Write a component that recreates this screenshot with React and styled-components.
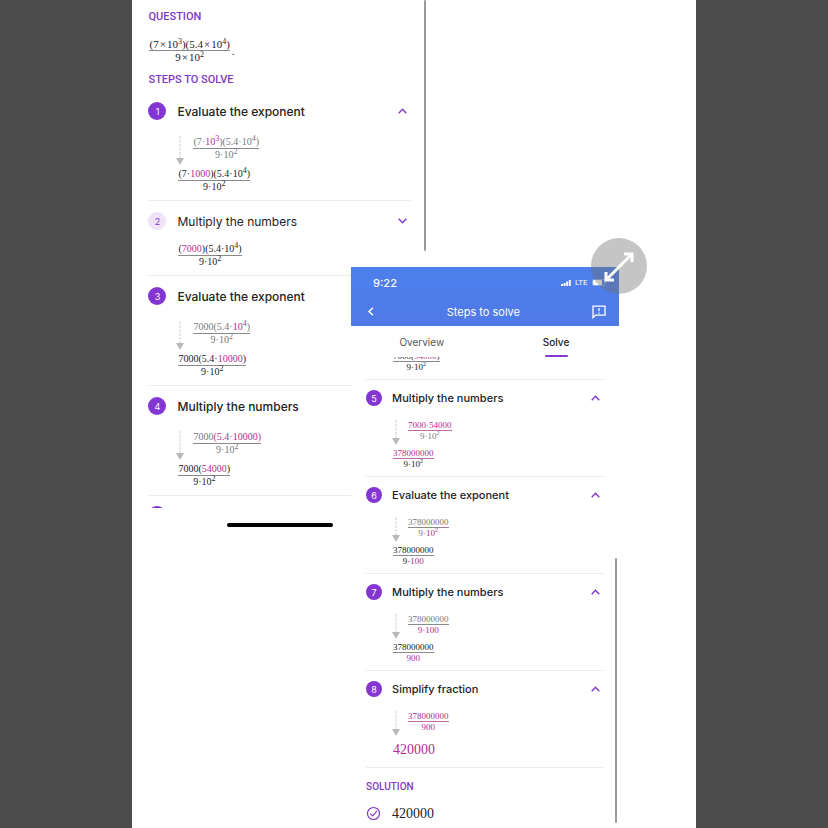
import React, { useState } from "react";
import styled, { createGlobalStyle, css, ThemeProvider } from "styled-components";

const GlobalStyle = createGlobalStyle`
  * {
    box-sizing: border-box;
  }

  body {
    margin: 0;
    background: #4b4b4b;
    color: #222226;
    font-family: Inter, "Liberation Sans", sans-serif;
  }

  button {
    border: 0;
    padding: 0;
    background: none;
    color: inherit;
    font: inherit;
    cursor: pointer;
  }
`;

const large = {
  title: "12px",
  label: "11px",
  math: "10px",
  line: "12px",
  sup: "8px",
  supRise: "4px",
  badge: "18px",
  badgeText: "9px",
  gap: "11px",
  header: "20px",
  stepTop: "10px",
  workTop: "15px",
  work: "29px",
  indent: "30px",
  arrow: 29,
};

const small = {
  title: "11px",
  label: "10px",
  math: "9px",
  line: "10px",
  sup: "6px",
  supRise: "4px",
  badge: "16px",
  badgeText: "9px",
  gap: "10px",
  header: "18px",
  stepTop: "9px",
  workTop: "13px",
  work: "25px",
  indent: "27px",
  arrow: 25,
};

const Sheet = styled.main`
  width: 68%;
  height: 100vh;
  min-height: 600px;
  margin: 0 auto;
  background: #fff;
  overflow: hidden;
  display: grid;
  grid-template-columns: 219fr 75fr 193fr 77fr;
  grid-template-rows: 100%;
`;

const Panel = styled.section`
  background: #fff;
  display: flex;
  flex-direction: column;
`;

const BackPanel = styled(Panel)`
  grid-area: 1 / 1 / 2 / 3;
  padding: 9px 15px 0 16px;
  position: relative;
`;

const FrontPanel = styled(Panel)`
  grid-area: 1 / 2 / 2 / 4;
  margin-top: 267px;
  position: relative;
`;

const ScrollThumb = styled.div`
  position: absolute;
  right: ${(p) => p.$right};
  top: ${(p) => p.$top};
  width: 2px;
  height: ${(p) => p.$height};
  border-radius: 1px;
  background: #999;
`;

const Label = styled.h2`
  margin: 0;
  font-family: Roboto, "Liberation Sans", sans-serif;
  font-size: ${(p) => p.theme.label};
  line-height: 16px;
  font-weight: 500;
  color: #8239c4;
`;

const Problem = styled.div`
  display: flex;
  align-items: center;
  gap: 2px;
  padding: 13px 1px 9px;
`;

const MathText = styled.span`
  font-family: "Liberation Serif", serif;
  font-size: ${(p) => (p.$question ? "11px" : p.theme.math)};
  line-height: ${(p) => p.theme.line};
  color: ${(p) => (p.$faded ? "#77777b" : "#222226")};
  white-space: nowrap;
`;

const FractionBox = styled(MathText)`
  display: inline-flex;
  flex-direction: column;
  text-align: center;
`;

const Numerator = styled.span`
  border-bottom: 1px solid ${(p) => (p.$marked ? "#c06aa9" : "#8a8a8e")};
`;

const Denominator = styled.span``;

const Times = styled.span`
  padding: 0 1px;
`;

const Sup = styled.sup`
  font-size: ${(p) => p.theme.sup};
  line-height: 0;
  vertical-align: ${(p) => p.theme.supRise};
`;

const Mark = styled.span`
  color: #b32d8f;
`;

const StepItem = styled.li`
  padding: ${(p) => p.theme.stepTop} 0 7px;
  border-bottom: 1px solid #ececf0;
`;

const Steps = styled.ol`
  list-style: none;
  margin: ${(p) => (p.$spaced ? "3px" : "0")} 0 0;
  padding: 0;
`;

const StepHeader = styled.button`
  width: 100%;
  height: ${(p) => p.theme.header};
  display: flex;
  align-items: center;
  gap: ${(p) => p.theme.gap};
  padding-right: 4px;
  text-align: left;
`;

const Badge = styled.span`
  flex: none;
  width: ${(p) => p.theme.badge};
  height: ${(p) => p.theme.badge};
  border-radius: 50%;
  display: grid;
  place-items: center;
  font-size: ${(p) => p.theme.badgeText};
  ${(p) =>
    p.$open
      ? css`
          background: #8436d2;
          color: #fff;
        `
      : css`
          background: #efe2f9;
          color: #8436d2;
        `}
`;

const StepTitle = styled.span`
  flex: 1;
  font-size: ${(p) => p.theme.title};
  font-weight: ${(p) => (p.$open ? 500 : 400)};
  white-space: nowrap;
`;

const Working = styled.div`
  display: flex;
  align-items: flex-start;
  gap: 9px;
  height: ${(p) => p.theme.work};
  margin: ${(p) => p.theme.workTop} 0 3px;
  padding-left: 28px;
`;

const SmallWorking = styled(Working)`
  padding-left: 26px;
  gap: 8px;
`;

const Result = styled.div`
  display: flex;
  padding-left: ${(p) => p.theme.indent};
  margin-top: ${(p) => (p.$open ? "0" : "12px")};
`;

const BigNumber = styled(MathText)`
  font-size: 14px;
  line-height: 21px;
`;

const Peek = styled.div`
  height: 12px;
  padding-top: 10px;
  overflow: hidden;
`;

const HomeBar = styled.div`
  align-self: center;
  width: 106px;
  height: 4px;
  margin-top: 15px;
  border-radius: 2px;
  background: #000;
`;

const AppBar = styled.header`
  height: 59px;
  flex: none;
  background: linear-gradient(#4c80ec, #5079e8);
  color: #fff;
  padding: 0 13px 0 16px;
`;

const StatusBar = styled.div`
  height: 30px;
  padding: 1px 0 0 6px;
  display: flex;
  align-items: center;
  gap: 4px;
  font-family: Roboto, "Liberation Sans", sans-serif;
  font-size: 8px;
`;

const Clock = styled.span`
  flex: 1;
  font-family: Inter, "Liberation Sans", sans-serif;
  font-size: 11px;
  font-weight: 500;
`;

const NavBar = styled.div`
  height: 29px;
  display: flex;
  align-items: center;
  justify-content: space-between;

  button {
    display: flex;
  }
`;

const NavTitle = styled.h1`
  margin: 0;
  font-size: 11px;
  font-weight: 400;
`;

const Tabs = styled.nav`
  display: flex;
  flex: none;
  gap: 9px;
  height: 31px;
  padding-left: 8px;
`;

const Tab = styled.button`
  flex: 1 1 0;
  display: flex;
  flex-direction: column;
  align-items: center;
  justify-content: space-between;
  font-size: 10px;
  line-height: 32px;
  font-weight: ${(p) => (p.$active ? 500 : 400)};
  color: ${(p) => (p.$active ? "#222226" : "#55555a")};

  span {
    height: 29px;
  }

  &::after {
    content: "";
    width: 23px;
    height: 2px;
    border-radius: 1px;
    background: ${(p) => (p.$active ? "#8436d2" : "transparent")};
  }
`;

const TabBody = styled.div`
  padding: 0 15px;
`;

const CutOff = styled.div`
  height: 23px;
  display: flex;
  align-items: flex-end;
  padding: 0 0 7px 27px;
  border-bottom: 1px solid #ececf0;
  overflow: hidden;
`;

const Solution = styled.div`
  padding-top: 11px;
`;

const Answer = styled.div`
  display: flex;
  align-items: center;
  gap: 11px;
  margin-top: 8px;
`;

const ExpandButton = styled.button`
  position: absolute;
  top: -29px;
  right: -28px;
  width: 56px;
  height: 56px;
  border-radius: 50%;
  background: rgba(110, 110, 110, 0.4);

  svg {
    display: block;
  }
`;

const Chevron = ({ open }) => (
  <svg width="9" height="6" viewBox="0 0 9 6" fill="none" stroke="#8239c4" strokeWidth="1.4">
    <path d={open ? "M0.7 5.2 4.5 1.2 8.3 5.2" : "M0.7 0.8 4.5 4.8 8.3 0.8"} />
  </svg>
);

const Arrow = ({ height }) => (
  <svg width="8" height={height} viewBox={`0 0 8 ${height}`}>
    <path d={`M4 0V${height - 7}`} stroke="#cfcfcf" strokeDasharray="3 1" />
    <path d={`M0 ${height - 7}H8L4 ${height}Z`} fill="#b9b9b9" />
  </svg>
);

const Signal = () => (
  <svg width="10" height="6" viewBox="0 0 10 6" fill="#fff">
    <rect x="0" y="4" width="2" height="2" />
    <rect x="2.6" y="3" width="2" height="3" />
    <rect x="5.2" y="1.5" width="2" height="4.5" />
    <rect x="7.8" y="0" width="2" height="6" />
  </svg>
);

const Battery = () => (
  <svg width="14" height="7" viewBox="0 0 14 7">
    <rect x="0.5" y="0.5" width="12" height="6" rx="1.5" fill="none" stroke="#fff" strokeOpacity="0.3" />
    <rect x="1" y="1" width="9" height="5" rx="1" fill="#fff" />
    <rect x="13" y="2.5" width="1" height="2" fill="#fff" fillOpacity="0.4" />
  </svg>
);

const Back = () => (
  <svg width="8" height="9" viewBox="0 0 8 9" fill="none" stroke="#fff" strokeWidth="1.4">
    <path d="M6 0.7 2 4.5 6 8.3" />
  </svg>
);

const Feedback = () => (
  <svg width="14" height="14" viewBox="0 0 14 14" fill="none" stroke="#fff" strokeWidth="1.3">
    <path d="M1 12.6V1.2H13V10.2H3.4Z" />
    <path d="M7 3V6.2M7 7.4V8.8" />
  </svg>
);

const CheckCircle = () => (
  <svg width="15" height="15" viewBox="0 0 15 15" fill="none" stroke="#8239c4" strokeWidth="1.2">
    <circle cx="7.5" cy="7.5" r="6" />
    <path d="M4.3 7.6 6.6 9.9 10.9 5.2" />
  </svg>
);

const ExpandIcon = () => (
  <svg width="56" height="56" viewBox="0 0 56 56" fill="none" stroke="#fff" strokeWidth="3">
    <path d="M16 41 40 17" />
    <path d="M33 16H41V24M15 34V42H23" />
  </svg>
);

const Fraction = ({ top, bottom, faded, marked, question }) => (
  <FractionBox $faded={faded} $question={question}>
    <Numerator $marked={marked}>{top}</Numerator>
    <Denominator>{bottom}</Denominator>
  </FractionBox>
);

const Power = ({ of = "10", to }) => (
  <>
    {of}
    <Sup>{to}</Sup>
  </>
);

const Step = ({ number, title, from, to, compact, collapsed = false }) => {
  const [open, setOpen] = useState(!collapsed);
  const Work = compact ? SmallWorking : Working;

  return (
    <StepItem>
      <StepHeader aria-expanded={open} onClick={() => setOpen(!open)}>
        <Badge $open={open}>{number}</Badge>
        <StepTitle $open={open}>{title}</StepTitle>
        <Chevron open={open} />
      </StepHeader>
      {open && (
        <Work>
          <Arrow height={compact ? small.arrow : large.arrow} />
          {from}
        </Work>
      )}
      <Result $open={open}>{to}</Result>
    </StepItem>
  );
};

const nineHundred = (
  <>
    9·<Power to="2" />
  </>
);

const Overview = () => (
  <ThemeProvider theme={large}>
    <BackPanel>
      <Label>QUESTION</Label>
      <Problem>
        <Fraction
          question
          top={<>(7<Times>×</Times><Power to="3" />)(5.4<Times>×</Times><Power to="4" />)</>}
          bottom={<>9<Times>×</Times><Power to="2" /></>}
        />
        <MathText $question>.</MathText>
      </Problem>
      <Label>STEPS TO SOLVE</Label>
      <Steps $spaced>
        <Step
          number={1}
          title="Evaluate the exponent"
          from={
            <Fraction
              faded
              top={<>(7·<Mark><Power to="3" /></Mark>)(5.4·<Power to="4" />)</>}
              bottom={nineHundred}
            />
          }
          to={<Fraction top={<>(7·<Mark>1000</Mark>)(5.4·<Power to="4" />)</>} bottom={nineHundred} />}
        />
        <Step
          number={2}
          title="Multiply the numbers"
          collapsed
          from={<Fraction faded top={<>(<Mark>7·1000</Mark>)(5.4·<Power to="4" />)</>} bottom={nineHundred} />}
          to={<Fraction top={<>(<Mark>7000</Mark>)(5.4·<Power to="4" />)</>} bottom={nineHundred} />}
        />
        <Step
          number={3}
          title="Evaluate the exponent"
          from={<Fraction faded top={<>7000(5.4·<Mark><Power to="4" /></Mark>)</>} bottom={nineHundred} />}
          to={<Fraction top={<>7000(5.4·<Mark>10000</Mark>)</>} bottom={nineHundred} />}
        />
        <Step
          number={4}
          title="Multiply the numbers"
          from={<Fraction faded top={<>7000<Mark>(5.4·10000)</Mark></>} bottom={nineHundred} />}
          to={<Fraction top={<>7000(<Mark>54000</Mark>)</>} bottom={nineHundred} />}
        />
      </Steps>
      <Peek>
        <Badge $open />
      </Peek>
      <HomeBar />
      <ScrollThumb $right="0" $top="0" $height="251px" />
    </BackPanel>
  </ThemeProvider>
);

const Solve = () => (
  <ThemeProvider theme={small}>
    <FrontPanel>
      <AppBar>
        <StatusBar>
          <Clock>9:22</Clock>
          <Signal />
          <span>LTE</span>
          <Battery />
        </StatusBar>
        <NavBar>
          <button aria-label="Back"><Back /></button>
          <NavTitle>Steps to solve</NavTitle>
          <button aria-label="Send feedback"><Feedback /></button>
        </NavBar>
      </AppBar>
      <Tabs>
        <Tab><span>Overview</span></Tab>
        <Tab $active aria-current="page"><span>Solve</span></Tab>
      </Tabs>
      <TabBody>
        <CutOff>
          <Fraction top={<>7000(<Mark>54000</Mark>)</>} bottom={nineHundred} />
        </CutOff>
        <Steps>
          <Step
            compact
            number={5}
            title="Multiply the numbers"
            from={<Fraction faded marked top={<Mark>7000·54000</Mark>} bottom={nineHundred} />}
            to={<Fraction marked top={<Mark>378000000</Mark>} bottom={nineHundred} />}
          />
          <Step
            compact
            number={6}
            title="Evaluate the exponent"
            from={<Fraction faded top="378000000" bottom={<>9·<Mark><Power to="2" /></Mark></>} />}
            to={<Fraction top="378000000" bottom={<>9·<Mark>100</Mark></>} />}
          />
          <Step
            compact
            number={7}
            title="Multiply the numbers"
            from={<Fraction faded top="378000000" bottom={<Mark>9·100</Mark>} />}
            to={<Fraction top="378000000" bottom={<Mark>900</Mark>} />}
          />
          <Step
            compact
            number={8}
            title="Simplify fraction"
            from={<Fraction faded marked top={<Mark>378000000</Mark>} bottom={<Mark>900</Mark>} />}
            to={<BigNumber><Mark>420000</Mark></BigNumber>}
          />
        </Steps>
        <Solution>
          <Label>SOLUTION</Label>
          <Answer>
            <CheckCircle />
            <BigNumber>420000</BigNumber>
          </Answer>
        </Solution>
      </TabBody>
      <ScrollThumb $right="2px" $top="291px" $height="265px" />
      <ExpandButton aria-label="Expand">
        <ExpandIcon />
      </ExpandButton>
    </FrontPanel>
  </ThemeProvider>
);

const App = () => (
  <>
    <GlobalStyle />
    <Sheet>
      <Overview />
      <Solve />
    </Sheet>
  </>
);

export default App;
